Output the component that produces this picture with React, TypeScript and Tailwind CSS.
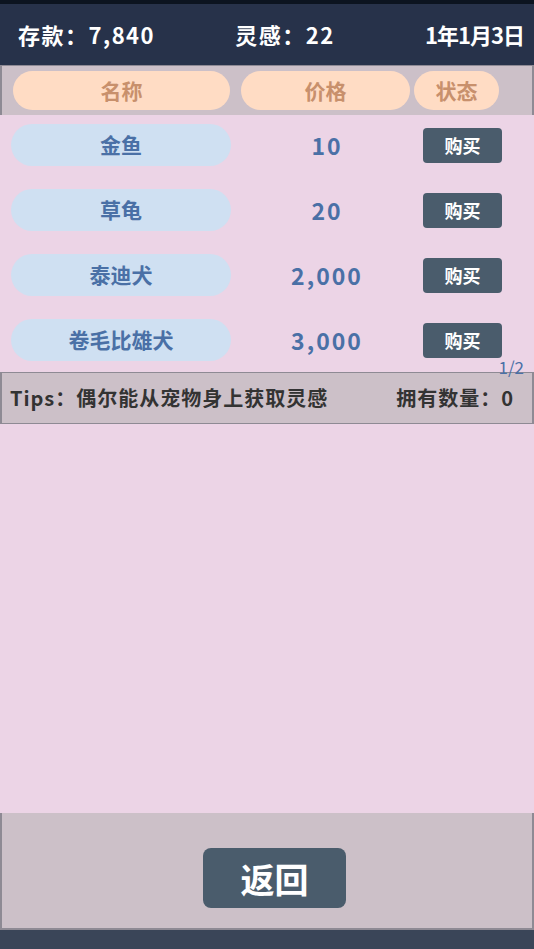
import React from 'react';

const pets = [
  { name: '金鱼', price: '10' },
  { name: '草龟', price: '20' },
  { name: '泰迪犬', price: '2,000' },
  { name: '卷毛比雄犬', price: '3,000' },
];

const font = { fontFamily: '"Noto Sans CJK SC", "Noto Sans", sans-serif' };

export default function App() {
  return (
    <div className="w-[534px] h-[949px] flex flex-col bg-[#ecd4e6] font-bold" style={font}>
      {/* top strip + stats */}
      <div className="h-[4px] bg-[#0c1420]" />
      <div className="h-[61px] bg-[#27324a] flex items-center justify-between pl-[18px] pr-[10px] text-white text-[22px] tracking-[1.5px]">
        <span>存款：7,840</span>
        <span className="mr-[10px]">灵感：22</span>
        <span className="tracking-[-1px]">1年1月3日</span>
      </div>

      {/* column titles */}
      <div className="h-[50px] bg-[#ccc0c8] border-x-2 border-t border-[#8e8a94] flex items-center pl-[11px] text-[#c8906c] text-[21px]">
        <div className="w-[217px] h-[39px] rounded-full bg-[#ffdcc4] flex items-center justify-center">名称</div>
        <div className="w-[169px] h-[39px] ml-[11px] rounded-full bg-[#ffdcc4] flex items-center justify-center">价格</div>
        <div className="w-[85px] h-[39px] ml-[4px] rounded-full bg-[#ffdcc4] flex items-center justify-center">状态</div>
      </div>

      {/* list */}
      <div className="flex flex-col gap-[23px] pt-[9px] pb-[11px] relative">
        {pets.map((p) => (
          <div key={p.name} className="h-[42px] flex items-center pl-[11px]">
            <div className="w-[220px] h-[42px] rounded-full bg-[#cfe0f2] flex items-center justify-center text-[#4a70a6] text-[21px]">
              {p.name}
            </div>
            <div className="w-[192px] h-[42px] flex items-center justify-center text-[#4a70a6] text-[23px] tracking-[2px]">
              {p.price}
            </div>
            <button className="w-[79px] h-[35px] rounded-[4px] bg-[#4a5c6c] text-white text-[18px] flex items-center justify-center">
              购买
            </button>
          </div>
        ))}
        <span className="absolute right-[10px] bottom-[-3px] text-[#4a70a6] text-[17px] font-normal leading-none">1/2</span>
      </div>

      {/* tips */}
      <div className="h-[52px] bg-[#ccc0c8] border-x-2 border-y border-[#8e8a94] flex items-center justify-between pl-[8px] pr-[18px] text-[#333333] text-[20px] tracking-[1px]">
        <span>Tips：偶尔能从宠物身上获取灵感</span>
        <span>拥有数量：0</span>
      </div>

      <div className="flex-1" />

      {/* bottom */}
      <div className="h-[117px] bg-[#ccc0c8] border-x-2 border-b-2 border-[#8e8a94] flex items-start justify-center pt-[35px] pl-[15px]">
        <button className="w-[143px] h-[60px] rounded-[8px] bg-[#4a5c6c] text-white text-[34px] flex items-center justify-center">
          返回
        </button>
      </div>
      <div className="h-[19px] bg-[#3a4558]" />
    </div>
  );
}
